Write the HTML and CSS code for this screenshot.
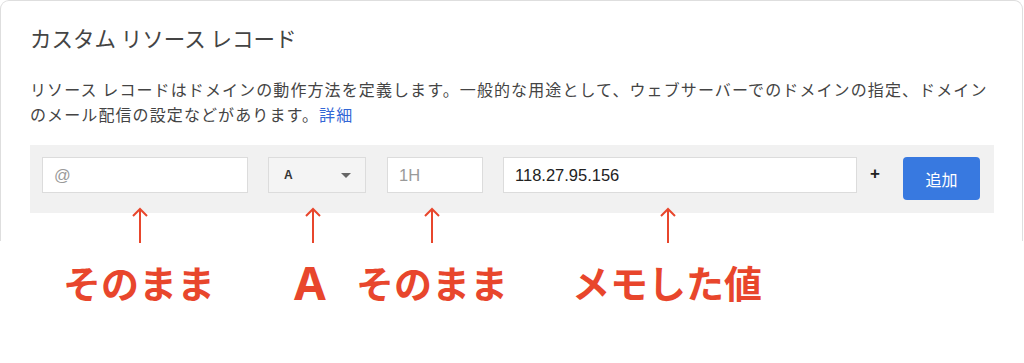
FILE: index.html
```html
<!DOCTYPE html>
<html lang="ja">
<head>
<meta charset="utf-8">
<title>カスタム リソース レコード</title>
<link rel="stylesheet" href="styles.css">
</head>
<body>
<div class="page">
  <section class="card">
    <h2 class="card-title">カスタム リソース レコード</h2>
    <p class="card-desc">リソース レコードはドメインの動作方法を定義します。一般的な用途として、ウェブサーバーでのドメインの指定、ドメインのメール配信の設定などがあります。<a class="link" href="#">詳細</a></p>
    <div class="record-row">
      <div class="field field-name"><span class="placeholder">@</span></div>
      <div class="select"><span class="select-value">A</span><span class="caret"></span></div>
      <div class="field field-ttl"><span class="placeholder">1H</span></div>
      <div class="field field-data"><span class="value">118.27.95.156</span></div>
      <span class="plus">+</span>
      <button class="btn-add" type="button">追加</button>
    </div>
  </section>

  <div class="notes">
    <div class="note note-1">
      <svg class="arrow" width="16" height="36" viewBox="0 0 16 36"><path d="M8 2 V36 M1 9 L8 2 L15 9" fill="none" stroke="#e8462c" stroke-width="2"/></svg>
    </div>
    <div class="note note-2">
      <svg class="arrow" width="16" height="36" viewBox="0 0 16 36"><path d="M8 2 V36 M1 9 L8 2 L15 9" fill="none" stroke="#e8462c" stroke-width="2"/></svg>
    </div>
    <div class="note note-3">
      <svg class="arrow" width="16" height="36" viewBox="0 0 16 36"><path d="M8 2 V36 M1 9 L8 2 L15 9" fill="none" stroke="#e8462c" stroke-width="2"/></svg>
    </div>
    <div class="note note-4">
      <svg class="arrow" width="16" height="36" viewBox="0 0 16 36"><path d="M8 2 V36 M1 9 L8 2 L15 9" fill="none" stroke="#e8462c" stroke-width="2"/></svg>
    </div>
    <div class="label label-1">そのまま</div>
    <div class="label label-2 label-latin">A</div>
    <div class="label label-3">そのまま</div>
    <div class="label label-4">メモした値</div>
  </div>
</div>
</body>
</html>
```

FILE: styles.css
```css
* { box-sizing: border-box; }

html, body {
  margin: 0;
  padding: 0;
  background: #ffffff;
}

body {
  font-family: "Noto Sans CJK JP", "Noto Sans", sans-serif;
  color: #3c3c3c;
}

.page {
  position: relative;
  width: 1024px;
  height: 363px;
  overflow: hidden;
}

.card {
  width: 1023px;
  height: 241px;
  border: 1px solid #dedede;
  border-bottom: none;
  border-radius: 9px 9px 0 0;
  padding: 22px 28px 0 29px;
}

.card-title {
  margin: 0;
  font-size: 21.5px;
  font-weight: 400;
  line-height: 30px;
  letter-spacing: 0;
  color: #444444;
}

.card-desc {
  margin: 24px 0 0 0;
  font-size: 16px;
  line-height: 25px;
  letter-spacing: 1.1px;
  color: #444444;
}

.link {
  color: #3367d6;
  text-decoration: none;
}

.record-row {
  margin-top: 18px;
  height: 68px;
  background: #f1f1f1;
  padding: 12px 12px 0 12px;
  display: flex;
  align-items: flex-start;
}

.field {
  height: 36px;
  background: #ffffff;
  border: 1px solid #dcdcdc;
  display: flex;
  align-items: center;
  padding-left: 11px;
  font-family: "Liberation Sans", "Noto Sans CJK JP", sans-serif;
  font-size: 16.5px;
}

.field-name { width: 206px; }
.field-ttl { width: 96px; margin-left: 21px; }
.field-data { width: 354px; margin-left: 20px; }

.placeholder { color: #9a9a9a; }
.value { color: #222222; }

.select {
  width: 98px;
  height: 36px;
  margin-left: 20px;
  background: #f4f4f4;
  border: 1px solid #dcdcdc;
  display: flex;
  align-items: center;
  justify-content: space-between;
  padding: 0 14px 0 15px;
}

.select-value {
  font-family: "Liberation Sans", sans-serif;
  font-weight: 700;
  font-size: 12px;
  color: #333333;
}

.caret {
  width: 0;
  height: 0;
  border-left: 5px solid transparent;
  border-right: 5px solid transparent;
  border-top: 5px solid #666666;
}

.plus {
  margin-left: 13px;
  width: 10px;
  height: 36px;
  line-height: 34px;
  font-family: "Liberation Sans", sans-serif;
  font-weight: 700;
  font-size: 17px;
  color: #222222;
}

.btn-add {
  margin-left: 23px;
  width: 77px;
  height: 43px;
  border: none;
  border-radius: 4px;
  background: #3879e0;
  color: #ffffff;
  font-family: "Noto Sans CJK JP", sans-serif;
  font-size: 16px;
  padding: 0;
}

/* annotation overlay */
.notes {
  position: absolute;
  left: 0;
  top: 0;
  width: 1024px;
  height: 363px;
  pointer-events: none;
}

.note {
  position: absolute;
  top: 207px;
  width: 16px;
  height: 36px;
}

.arrow { display: block; }

.note-1 { left: 132px; }
.note-2 { left: 305px; }
.note-3 { left: 424px; }
.note-4 { left: 660px; }

.label {
  position: absolute;
  top: 258px;
  font-family: "Noto Sans CJK JP", sans-serif;
  font-weight: 700;
  font-size: 38px;
  line-height: 48px;
  color: #e8462c;
  white-space: nowrap;
}

.label-latin {
  font-family: "Noto Sans", sans-serif;
  font-size: 46px;
}

.label-1 { left: 63px; }
.label-2 { left: 294px; }
.label-3 { left: 356px; }
.label-4 { left: 572px; }
```
